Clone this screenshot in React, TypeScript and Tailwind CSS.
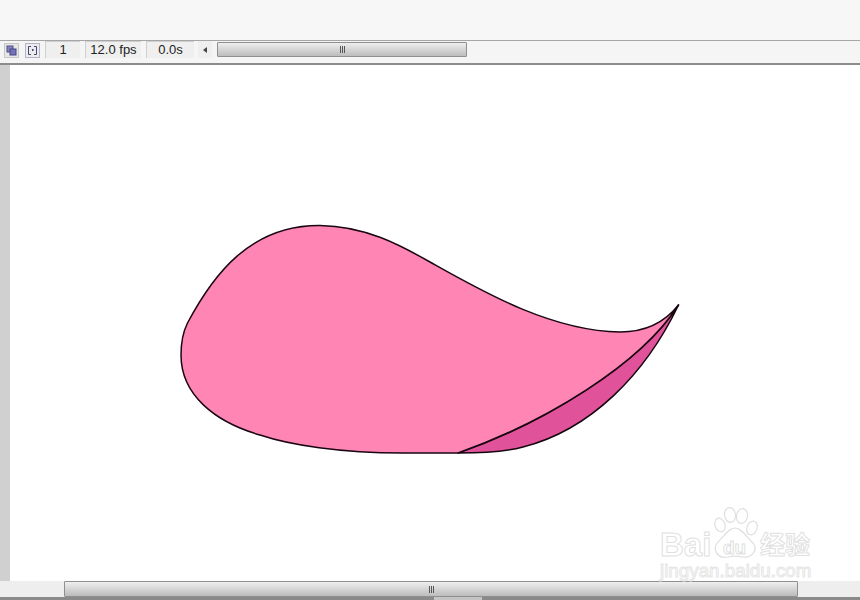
export default function App() {
  const cell = "h-[17px] flex items-center justify-center bg-[#efefef] border-t border-l border-[#cfcfcf] text-[13px] text-[#222]";
  const ghost = "text-white [-webkit-text-stroke:1px_#dfdfdf] [font-family:'Liberation_Sans',sans-serif] font-bold leading-none";
  const grip = (
    <div className="flex gap-[1px]">
      <span className="w-[1px] h-[7px] bg-[#555]" />
      <span className="w-[1px] h-[7px] bg-[#555]" />
      <span className="w-[1px] h-[7px] bg-[#555]" />
    </div>
  );
  return (
    <div className="w-[860px] h-[600px] overflow-hidden flex flex-col bg-white [font-family:'Liberation_Sans',sans-serif]">
      <div className="h-[40px] shrink-0 bg-[#f7f7f7]" />
      <div className="h-[25px] shrink-0 flex items-start bg-[#f5f5f5] border-t border-[#a6a6a6] border-b-2 border-b-[#8c8c8c] pl-[4px]">
        <svg width="15" height="15" viewBox="0 0 15 15" className="shrink-0 mt-[2px]">
          <rect x="0.5" y="0.5" width="14" height="14" fill="#e6e6e6" stroke="#c8c8c8" />
          <rect x="3" y="3" width="6" height="6" fill="#8484bc" stroke="#50508c" />
          <rect x="6" y="6" width="6" height="6" fill="#7474b4" stroke="#45458a" />
        </svg>
        <svg width="15" height="15" viewBox="0 0 15 15" className="shrink-0 ml-[6px] mt-[2px]">
          <rect x="0.5" y="0.5" width="14" height="14" fill="#ececec" stroke="#b4b4c8" />
          <path d="M6 3.5H3.5V11.5H6M9 3.5H11.5V11.5H9" fill="none" stroke="#45457a" />
          <rect x="7" y="6" width="1.5" height="2" fill="#45457a" />
        </svg>
        <div className={`${cell} w-[35px] ml-[5px]`}>1</div>
        <div className={`${cell} w-[56px] ml-[5px]`}>12.0 fps</div>
        <div className={`${cell} w-[48px] ml-[5px]`}>0.0s</div>
        <div className="w-[14px] h-[17px] ml-[4px] flex items-center justify-center bg-[#efefef]">
          <div className="w-0 h-0 border-y-[3px] border-y-transparent border-r-[4px] border-r-[#444]" />
        </div>
        <div className="w-[250px] h-[15px] ml-[5px] mt-[1px] flex items-center justify-center border border-[#8f8f8f] rounded-[1px] bg-gradient-to-b from-[#eeeeee] to-[#bdbdbd]">
          {grip}
        </div>
      </div>
      <div className="flex-1 flex relative min-h-0">
        <div className="w-[10px] shrink-0 bg-[#d0d0d0]" />
        <svg viewBox="10 65 850 516" className="flex-1 h-full">
          <path d="M678.5 305 C 645 375, 590 430, 523 447 C 505 452, 480 453, 458 453 C 540 425, 640 365, 678.5 305 Z" fill="#e05299" stroke="#14060e" strokeWidth="1.5" strokeLinejoin="round" />
          <path d="M187.5 323 C 213 275, 250 225, 320 225.5 C 365 226, 400 245, 430 262 C 480 290, 550 331, 620 332 C 645 332, 665 322, 678.5 305 C 640 365, 545 422, 458 453 L 403 453 C 340 453, 290 445, 260 435 C 215 422, 181 395, 181 355 C 181 343, 183 332, 187.5 323 Z" fill="#ff85b5" stroke="#1a0612" strokeWidth="1.5" strokeLinejoin="round" />
        </svg>
        <div className="absolute left-[660px] top-[442px] w-[155px] h-[75px]">
          <span className={`${ghost} absolute left-0 top-[21px] text-[33px]`}>Bai</span>
          <svg width="48" height="54" viewBox="0 0 48 54" className="absolute left-[51px] top-0" fill="white" stroke="#dfdfdf" strokeWidth="1.2">
            <ellipse cx="9" cy="18" rx="5" ry="7" transform="rotate(-20 9 18)" />
            <ellipse cx="19" cy="8" rx="5.5" ry="7.5" transform="rotate(-8 19 8)" />
            <ellipse cx="31" cy="9" rx="5.5" ry="7.5" transform="rotate(10 31 9)" />
            <ellipse cx="41" cy="21" rx="5" ry="7" transform="rotate(22 41 21)" />
            <path d="M24 21 C 31 21, 36 31, 42 36 C 48 44, 40 51, 31 50 C 27 49, 21 49, 17 50 C 8 52, 1 44, 6 36 C 12 31, 17 21, 24 21 Z" />
          </svg>
          <span className={`${ghost} absolute left-[63px] top-[31px] text-[19px]`}>du</span>
          <span className="absolute left-[100px] top-[24px] text-[25px] leading-none text-white [-webkit-text-stroke:1px_#dfdfdf] [font-family:'Noto_Sans_CJK_SC',sans-serif] font-bold">经验</span>
          <span className="absolute left-0 top-[55px] text-[18.8px] leading-none text-white [-webkit-text-stroke:1px_#e6e6e6] [font-family:'Liberation_Sans',sans-serif]">jingyan.baidu.com</span>
        </div>
      </div>
      <div className="h-[19px] shrink-0 flex flex-col">
        <div className="h-[16px] bg-[#eeeeee] pl-[64px] flex">
          <div className="w-[734px] h-[16px] flex items-center justify-center border border-[#8f8f8f] rounded-[1px] bg-gradient-to-b from-[#efefef] to-[#bcbcbc]">
            {grip}
          </div>
        </div>
        <div className="flex-1 bg-[#8a8a8a] pl-[434px]">
          <div className="w-[48px] h-full bg-[#c4c4c4]" />
        </div>
      </div>
    </div>
  );
}
